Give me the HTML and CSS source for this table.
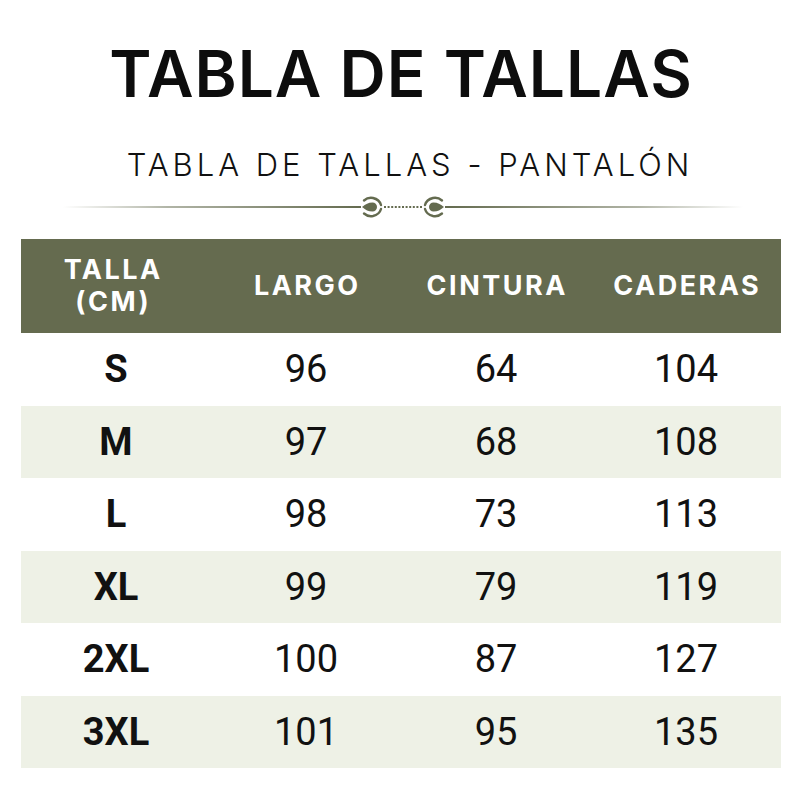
FILE: index.html
```html
<!DOCTYPE html>
<html lang="es">
<head>
<meta charset="utf-8">
<title>Tabla de tallas</title>
<link rel="stylesheet" href="styles.css">
</head>
<body>
<div class="page">
  <h1 class="title">TABLA DE TALLAS</h1>
  <h2 class="subtitle">TABLA DE TALLAS - PANTALÓN</h2>
  <div class="divider">
    <span class="line line-left"></span>
    <svg class="ornament" width="84" height="24" viewBox="0 0 84 24" aria-hidden="true">
      <g fill="#646b4f">
        <path d="M1 12 C5 9 7 7.5 11.5 7.5 A4.5 4.5 0 0 1 11.5 16.5 C7 16.5 5 15 1 12 Z"/>
        <path d="M83 12 C79 9 77 7.5 72.5 7.5 A4.5 4.5 0 0 0 72.5 16.5 C77 16.5 79 15 83 12 Z"/>
      </g>
      <g fill="none" stroke="#646b4f" stroke-width="2.4" stroke-linecap="round">
        <path d="M3 5.5 Q7 2 12 3 Q18.5 4.5 20 10"/>
        <path d="M3 18.5 Q7 22 12 21 Q18.5 19.5 20 14"/>
        <path d="M81 5.5 Q77 2 72 3 Q65.5 4.5 64 10"/>
        <path d="M81 18.5 Q77 22 72 21 Q65.5 19.5 64 14"/>
      </g>
      <line x1="23" y1="12" x2="61" y2="12" stroke="#646b4f" stroke-width="2" stroke-dasharray="2 1.6"/>
    </svg>
    <span class="line line-right"></span>
  </div>
  <div class="table">
    <div class="row head">
      <div class="cell first">TALLA<br>(CM)</div>
      <div class="cell">LARGO</div>
      <div class="cell">CINTURA</div>
      <div class="cell">CADERAS</div>
    </div>
    <div class="row">
      <div class="cell size">S</div><div class="cell">96</div><div class="cell">64</div><div class="cell">104</div>
    </div>
    <div class="row alt">
      <div class="cell size">M</div><div class="cell">97</div><div class="cell">68</div><div class="cell">108</div>
    </div>
    <div class="row">
      <div class="cell size">L</div><div class="cell">98</div><div class="cell">73</div><div class="cell">113</div>
    </div>
    <div class="row alt">
      <div class="cell size">XL</div><div class="cell">99</div><div class="cell">79</div><div class="cell">119</div>
    </div>
    <div class="row">
      <div class="cell size">2XL</div><div class="cell">100</div><div class="cell">87</div><div class="cell">127</div>
    </div>
    <div class="row alt">
      <div class="cell size">3XL</div><div class="cell">101</div><div class="cell">95</div><div class="cell">135</div>
    </div>
  </div>
</div>
</body>
</html>
```

FILE: styles.css
```css
html, body {
  margin: 0;
  padding: 0;
  background: #ffffff;
}

.page {
  width: 800px;
  height: 800px;
  box-sizing: border-box;
  padding-top: 38px;
  display: flex;
  flex-direction: column;
  align-items: center;
}

.title {
  margin: 0;
  font-family: Inter, "Liberation Sans", sans-serif;
  font-weight: 600;
  font-size: 64px;
  line-height: 72px;
  letter-spacing: 1px;
  color: #0d0d0d;
  padding-left: 2px;
}

.subtitle {
  margin: 37px 0 0 0;
  font-family: Inter, "Liberation Sans", sans-serif;
  font-weight: 300;
  font-size: 31px;
  line-height: 36px;
  letter-spacing: 4px;
  color: #111111;
  padding-left: 20px;
}

.divider {
  margin-top: 12px;
  width: 680px;
  height: 24px;
  display: flex;
  align-items: center;
  padding-left: 6px;
}

.line {
  flex: 1;
  height: 2px;
}

.line-left {
  background: linear-gradient(to right, rgba(100,107,79,0) 0%, rgba(100,107,79,0.5) 35%, #646b4f 100%);
}

.line-right {
  background: linear-gradient(to left, rgba(100,107,79,0) 0%, rgba(100,107,79,0.5) 35%, #646b4f 100%);
}

.ornament {
  display: block;
  flex: none;
}

.table {
  margin-top: 20px;
  width: 760px;
  display: flex;
  flex-direction: column;
  padding-left: 2px;
}

.row {
  display: grid;
  grid-template-columns: repeat(4, 1fr);
  height: 72.5px;
  align-items: center;
}

.row.alt {
  background: #eef1e6;
}

.row.head {
  height: 94px;
  background: #656b4f;
}

.cell {
  text-align: center;
  font-family: Roboto, "Liberation Sans", sans-serif;
  font-size: 38px;
  color: #111111;
}

.cell.size {
  font-weight: 700;
}

.head .cell {
  font-family: Inter, "Liberation Sans", sans-serif;
  font-weight: 700;
  font-size: 27px;
  line-height: 32px;
  letter-spacing: 2.5px;
  padding-left: 2.5px;
  color: #ffffff;
}

.head .cell.first {
  padding-right: 8px;
}
```
